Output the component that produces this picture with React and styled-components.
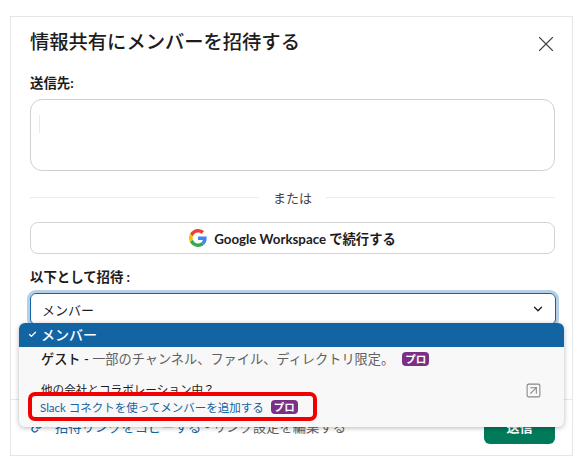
import React from 'react'
import styled, { createGlobalStyle } from 'styled-components'
import { X, ChevronDown, Check, SquareArrowUpRight, Link } from 'lucide-react'

const GlobalStyle = createGlobalStyle`
  html, body {
    margin: 0;
    padding: 0;
    background: #fff;
    font-family: Lato, "Noto Sans CJK JP", sans-serif;
    color: #1d1c1d;
  }
  * { box-sizing: border-box; }
`

const Page = styled.div`
  width: 582px;
  height: 466px;
  padding: 16px 9px 10px 10px;
  overflow: hidden;
`

const Dialog = styled.div`
  height: 440px;
  border: 1px solid #e6e6e6;
  display: flex;
  flex-direction: column;
`

const Body = styled.div`
  padding: 10px 17px 0 19px;
  height: 383px;
  border-bottom: 1px solid #e8e8e8;
`

const Header = styled.div`
  display: flex;
  align-items: center;
  justify-content: space-between;
  height: 30px;
  margin-bottom: 16px;
`

const Title = styled.h1`
  margin: 0;
  font-size: 19.3px;
  font-weight: 500;
  line-height: 30px;
`

const Close = styled.button`
  border: 0;
  background: none;
  padding: 0;
  display: flex;
  margin: 4px -4px 0 0;
  color: #454245;
`

const Label = styled.div`
  font-size: 13.4px;
  font-weight: 700;
  line-height: 20px;
  height: 20px;
`

const Recipients = styled.div`
  position: relative;
  height: 72px;
  margin-top: 6px;
  border: 1px solid #cfcfcf;
  border-radius: 12px;
  padding: 15px 8px;
`

const Caret = styled.div`
  width: 1px;
  height: 18px;
  background: #daf0f7;
`

const Divider = styled.div`
  display: flex;
  align-items: center;
  gap: 14px;
  margin: 16px 0 15px;
  height: 20px;
  font-size: 13px;
  color: #454245;

  &::before, &::after {
    content: '';
    flex: 1;
    height: 1px;
    background: #ececec;
  }
`

const GoogleButton = styled.button`
  width: 100%;
  height: 32px;
  display: flex;
  align-items: center;
  justify-content: center;
  gap: 7px;
  background: #fff;
  border: 1px solid #d3d3d3;
  border-radius: 8px;
  font: 700 13.3px Lato, "Noto Sans CJK JP", sans-serif;
  color: #1d1c1d;
`

const InviteLabel = styled(Label)`
  margin-top: 13px;
`

const SelectWrap = styled.div`
  position: relative;
  margin-top: 6px;
`

const Select = styled.div`
  height: 32px;
  margin-right: -1px;
  border: 1px solid #1264a3;
  border-radius: 6px;
  box-shadow: 0 0 0 3px #b5d0e6;
  padding: 0 10px 0 11px;
  display: flex;
  align-items: center;
  justify-content: space-between;
  font-size: 13px;
  color: #1d1c1d;
`

const Menu = styled.div`
  position: absolute;
  top: 30px;
  left: -11px;
  width: 545px;
  height: 104px;
  background: #f8f8f8;
  border-radius: 6px;
  box-shadow: 0 1px 5px rgba(0, 0, 0, 0.28);
  overflow: hidden;
`

const SelectedItem = styled.div`
  height: 24px;
  padding: 0 0 2px 9px;
  background: #1264a3;
  color: #fff;
  display: flex;
  align-items: center;
  gap: 4px;
  font-size: 14px;
  font-weight: 500;
`

const GuestItem = styled.div`
  display: flex;
  align-items: center;
  height: 24px;
  padding: 0 0 1px 22px;
  font-size: 13.2px;
  color: #616061;

  b {
    font-weight: 500;
    color: #1d1c1d;
  }
`

const ProBadge = styled.span`
  display: inline-flex;
  align-items: center;
  justify-content: center;
  width: 27px;
  height: 14px;
  margin-left: ${p => p.$gap}px;
  background: #7c3085;
  color: #fff;
  border-radius: 4px;
  font-size: 10.5px;
  font-weight: 700;
`

const ConnectItem = styled.div`
  position: relative;
  margin-top: 12px;
  padding-left: 9px;
`

const ConnectQuestion = styled.div`
  padding-left: 13px;
  font-size: 11.6px;
  line-height: 14px;
  height: 13px;
  color: #1d1c1d;
`

const Highlight = styled.div`
  display: flex;
  align-items: center;
  width: 289px;
  height: 29px;
  margin-top: -4px;
  padding-left: 8px;
  border: 4px solid #f00000;
  border-radius: 7px;
  font-size: 11.5px;
  color: #1264a3;
  position: relative;
`

const External = styled.span`
  position: absolute;
  top: -1px;
  right: 22px;
  display: flex;
  color: #868686;
`

const Footer = styled.div`
  flex: 1;
  display: flex;
  align-items: flex-end;
  justify-content: space-between;
  padding: 0 17px 11px 20px;
`

const CopyRow = styled.div`
  display: flex;
  align-items: center;
  gap: 11px;
  height: 20px;
  margin-bottom: 8px;
  font-size: 13.3px;
  color: #1264a3;

  span {
    color: #616061;
  }
`

const SendButton = styled.button`
  width: 71px;
  height: 32px;
  padding: 0 0 3px;
  border: 0;
  border-radius: 6px;
  background: #007a5a;
  color: #fff;
  font: 700 13px Lato, "Noto Sans CJK JP", sans-serif;
`

const GoogleLogo = () => (
  <svg width="18" height="18" viewBox="0 0 48 48">
    <path fill="#EA4335" d="M24 9.5c3.54 0 6.71 1.22 9.21 3.6l6.85-6.85C35.9 2.38 30.47 0 24 0 14.62 0 6.51 5.38 2.56 13.22l7.98 6.19C12.43 13.72 17.74 9.5 24 9.5z" />
    <path fill="#4285F4" d="M46.98 24.55c0-1.57-.15-3.09-.38-4.55H24v9.02h12.94c-.58 2.96-2.26 5.48-4.78 7.18l7.73 6c4.51-4.18 7.09-10.36 7.09-17.65z" />
    <path fill="#FBBC05" d="M10.53 28.59c-.48-1.45-.76-2.99-.76-4.59s.27-3.14.76-4.59l-7.98-6.19C.92 16.46 0 20.12 0 24c0 3.88.92 7.54 2.56 10.78l7.97-6.19z" />
    <path fill="#34A853" d="M24 48c6.48 0 11.93-2.13 15.89-5.81l-7.73-6c-2.15 1.45-4.92 2.3-8.16 2.3-6.26 0-11.57-4.22-13.47-9.91l-7.98 6.19C6.51 42.62 14.62 48 24 48z" />
  </svg>
)

export default function App() {
  return (
    <Page>
      <GlobalStyle />
      <Dialog>
        <Body>
          <Header>
            <Title>情報共有にメンバーを招待する</Title>
            <Close><X size={26} strokeWidth={1} /></Close>
          </Header>
          <Label>送信先:</Label>
          <Recipients><Caret /></Recipients>
          <Divider>または</Divider>
          <GoogleButton><GoogleLogo />Google Workspace で続行する</GoogleButton>
          <InviteLabel>以下として招待 :</InviteLabel>
          <SelectWrap>
            <Select>
              メンバー
              <ChevronDown size={14} strokeWidth={2.2} />
            </Select>
            <Menu>
              <SelectedItem><Check size={9} strokeWidth={3.5} />メンバー</SelectedItem>
              <GuestItem>
                <b>ゲスト -&nbsp;</b>一部のチャンネル、ファイル、ディレクトリ限定。
                <ProBadge $gap={8}>プロ</ProBadge>
              </GuestItem>
              <ConnectItem>
                <ConnectQuestion>他の会社とコラボレーション中？</ConnectQuestion>
                <Highlight>
                  Slack コネクトを使ってメンバーを追加する
                  <ProBadge $gap={7}>プロ</ProBadge>
                </Highlight>
                <External><SquareArrowUpRight size={17} strokeWidth={1.5} /></External>
              </ConnectItem>
            </Menu>
          </SelectWrap>
        </Body>
        <Footer>
          <CopyRow>
            <Link size={13} strokeWidth={2.4} />
            <div>招待リンクをコピーする<span> - リンク設定を編集する</span></div>
          </CopyRow>
          <SendButton>送信</SendButton>
        </Footer>
      </Dialog>
    </Page>
  )
}
